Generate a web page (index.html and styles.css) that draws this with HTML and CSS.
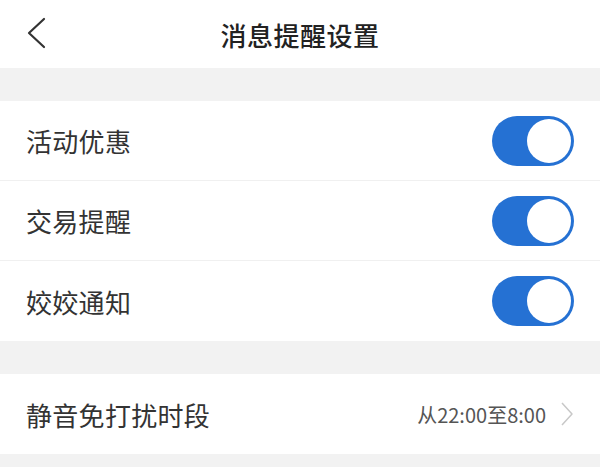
FILE: index.html
```html
<!DOCTYPE html>
<html lang="zh-CN">
<head>
  <meta charset="UTF-8" />
  <meta name="viewport" content="width=device-width, initial-scale=1.0" />
  <title>消息提醒设置</title>
  <link rel="stylesheet" href="styles.css">
</head>
<body>
  <header class="topbar">
    <a class="back" href="#">
      <svg width="20" height="32" viewBox="0 0 20 32">
        <path d="M18 2 L3 16 L18 30" fill="none" stroke="#333" stroke-width="2.2" stroke-linecap="round" stroke-linejoin="round"/>
      </svg>
    </a>
    <h1>消息提醒设置</h1>
  </header>

  <div class="gap"></div>

  <div class="group">
    <div class="row">
      <span class="label">活动优惠</span>
      <span class="switch on"><span class="knob"></span></span>
    </div>
    <div class="row">
      <span class="label">交易提醒</span>
      <span class="switch on"><span class="knob"></span></span>
    </div>
    <div class="row">
      <span class="label">姣姣通知</span>
      <span class="switch on"><span class="knob"></span></span>
    </div>
  </div>

  <div class="gap"></div>

  <div class="group">
    <div class="row">
      <span class="label">静音免打扰时段</span>
      <span class="value">
        从22:00至8:00
        <svg width="14" height="26" viewBox="0 0 14 26">
          <path d="M2 2 L12 13 L2 24" fill="none" stroke="#c8c8c8" stroke-width="1.5" stroke-linejoin="round"/>
        </svg>
      </span>
    </div>
  </div>

  <div class="rest"></div>
</body>
</html>
```

FILE: styles.css
```css
body {
  margin: 0;
  padding: 0;
  background: #f2f2f2;
  font-family: "Noto Sans CJK SC", "Noto Sans", sans-serif;
  color: #333;
}
.topbar {
  height: 68px;
  background: white;
  display: flex;
  align-items: center;
  justify-content: center;
  position: relative;
}
.back {
  position: absolute;
  left: 26px;
  top: 17px;
  display: block;
  line-height: 0;
}
.topbar h1 {
  margin: 0;
  font-size: 26px;
  font-weight: 500;
  color: #222;
  letter-spacing: 0.5px;
}
.gap {
  height: 33px;
}
.group {
  background: white;
}
.row {
  height: 79px;
  border-bottom: 1px solid #f0f0f0;
  display: flex;
  align-items: center;
  justify-content: space-between;
  padding: 0 26px 0 26px;
}
.group .row:last-child {
  border-bottom: none;
  height: 80px;
}
.label {
  font-size: 26px;
  color: #333;
  letter-spacing: 0.3px;
}
.switch {
  width: 82px;
  height: 50px;
  border-radius: 25px;
  background: #2571d3;
  display: flex;
  align-items: center;
  justify-content: flex-end;
  padding-right: 3px;
  box-sizing: border-box;
}
.knob {
  width: 44px;
  height: 44px;
  border-radius: 50%;
  background: white;
}
.value {
  display: flex;
  align-items: center;
  gap: 14px;
  font-size: 20px;
  color: #555;
  margin-right: 0;
}
.rest {
  height: 12px;
}
```
